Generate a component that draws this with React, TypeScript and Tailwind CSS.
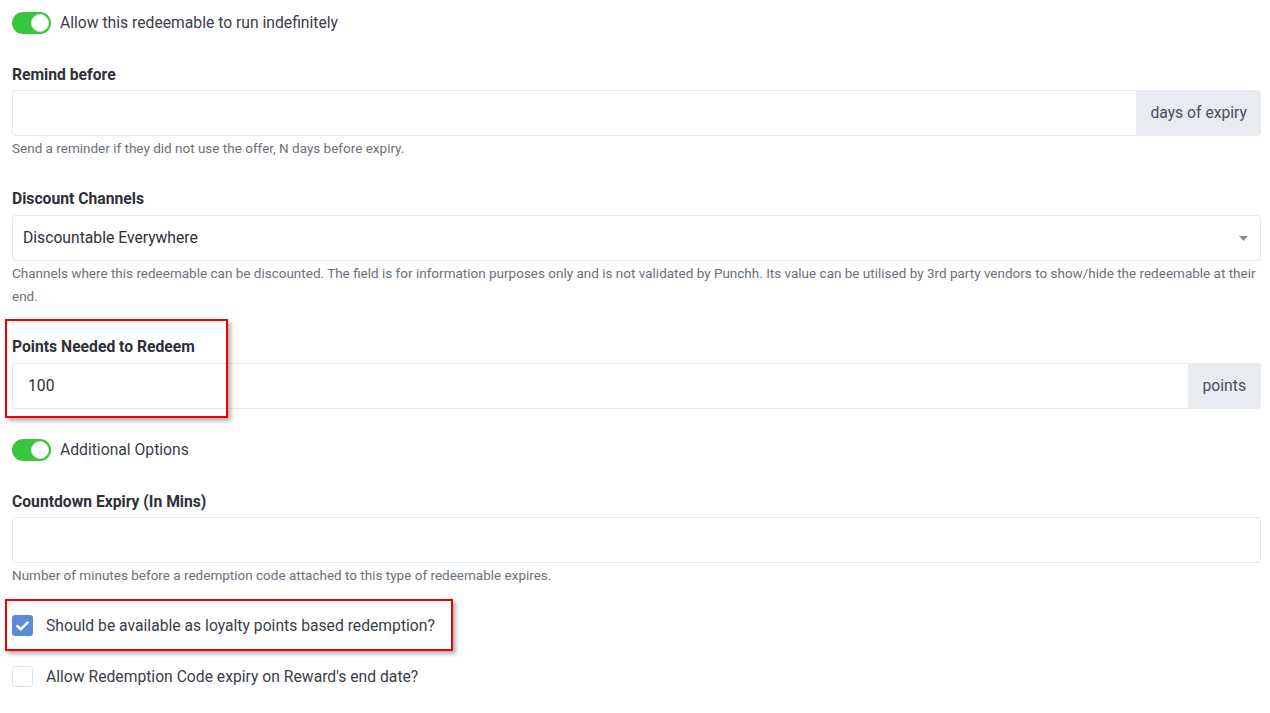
import React from 'react';

const Toggle: React.FC<{ label: string }> = ({ label }) => (
  <div className="flex items-center h-[22px]">
    <div className="relative w-[39px] h-[22px] rounded-full bg-[#38c540]">
      <div className="absolute right-[2px] top-[2px] w-[18px] h-[18px] rounded-full bg-white border border-[#e5e5e5]" />
    </div>
    <span className="ml-[9px] text-[15.7px] text-[#3b3d4a]">{label}</span>
  </div>
);

const Label: React.FC<{ children: React.ReactNode }> = ({ children }) => (
  <div className="pt-px text-[15.7px] leading-[20px] font-bold text-[#2f3039]">{children}</div>
);

const Help: React.FC<{ children: React.ReactNode }> = ({ children }) => (
  <div className="mt-px text-[13.5px] leading-[23px] text-[#6c7079]">{children}</div>
);

const App: React.FC = () => {
  return (
    <div
      className="min-h-screen bg-white pl-[12px] pr-[9px] pt-[12px]"
      style={{ fontFamily: 'Roboto, "Liberation Sans", sans-serif' }}
    >
      <Toggle label="Allow this redeemable to run indefinitely" />

      {/* Remind before */}
      <div className="mt-[30px]">
        <Label>Remind before</Label>
        <div className="mt-[5px] flex h-[46px]">
          <div className="flex-1 border border-[#e3e7ef] border-r-0 rounded-l-[4px]" />
          <div className="flex items-center px-[14px] bg-[#e8ebef] rounded-r-[4px] text-[15.7px] text-[#4a4f5a]">
            days of expiry
          </div>
        </div>
        <Help>Send a reminder if they did not use the offer, N days before expiry.</Help>
      </div>

      {/* Discount Channels */}
      <div className="mt-[28px]">
        <Label>Discount Channels</Label>
        <div className="mt-[6px] flex items-center justify-between h-[46px] border border-[#e3e7ef] rounded-[4px] pl-[10px] pr-[12px]">
          <span className="text-[15.7px] text-[#2f3039]">Discountable Everywhere</span>
          <svg width="9" height="5" viewBox="0 0 9 5">
            <path d="M0 0h9L4.5 5z" fill="#8a8d93" />
          </svg>
        </div>
        <Help>
          Channels where this redeemable can be discounted. The field is for information purposes only and is not validated by Punchh. Its value can be utilised by 3rd party vendors to show/hide the redeemable at their end.
        </Help>
      </div>

      {/* Points Needed */}
      <div className="mt-[28px] relative">
        <div className="absolute left-[-7px] top-[-17px] w-[223px] h-[99px] border-2 border-[#ee0000] shadow-[3px_3px_4px_rgba(0,0,0,0.3)] pointer-events-none z-10" />
        <Label>Points Needed to Redeem</Label>
        <div className="mt-[6px] flex h-[46px]">
          <div className="flex-1 flex items-center pl-[15px] border border-[#e3e7ef] border-r-0 rounded-l-[4px] text-[15.7px] text-[#2f3039]">
            100
          </div>
          <div className="flex items-center px-[15px] bg-[#e8ebef] rounded-r-[4px] text-[15.7px] text-[#4a4f5a]">
            points
          </div>
        </div>
      </div>

      <div className="mt-[30px]">
        <Toggle label="Additional Options" />
      </div>

      {/* Countdown Expiry */}
      <div className="mt-[30px]">
        <Label>Countdown Expiry (In Mins)</Label>
        <div className="mt-[5px] h-[46px] border border-[#e3e7ef] rounded-[4px]" />
        <Help>Number of minutes before a redemption code attached to this type of redeemable expires.</Help>
      </div>

      {/* Checkboxes */}
      <div className="mt-[28px] relative flex items-center h-[21px]">
        <div className="absolute left-[-7px] top-[-16px] w-[448px] h-[52px] border-2 border-[#ee0000] shadow-[3px_3px_4px_rgba(0,0,0,0.3)] pointer-events-none" />
        <div className="w-[21px] h-[21px] rounded-[3px] bg-[#5b8ad8] flex items-center justify-center">
          <svg width="13" height="10" viewBox="0 0 13 10">
            <path d="M1.5 5.2l3.3 3.1L11.5 1.6" fill="none" stroke="white" strokeWidth="2.6" strokeLinecap="round" strokeLinejoin="round" />
          </svg>
        </div>
        <span className="ml-[13px] text-[15.7px] text-[#3b3d4a]">Should be available as loyalty points based redemption?</span>
      </div>

      <div className="mt-[30px] flex items-center h-[21px]">
        <div className="w-[21px] h-[21px] rounded-[3px] border border-[#dfe3eb] bg-white" />
        <span className="ml-[13px] text-[15.7px] text-[#3b3d4a]">Allow Redemption Code expiry on Reward's end date?</span>
      </div>
    </div>
  );
};

export default App;
